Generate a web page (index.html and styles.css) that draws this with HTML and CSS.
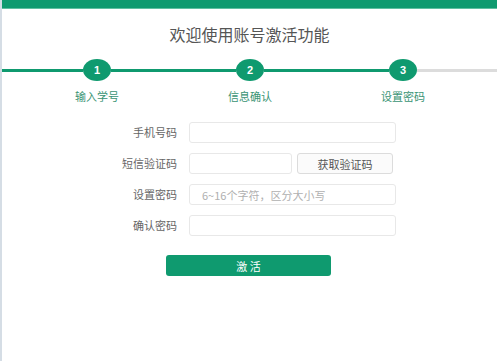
FILE: index.html
```html
<!DOCTYPE html>
<html lang="zh-CN">
<head>
    <meta charset="UTF-8">
    <meta name="viewport" content="width=device-width, initial-scale=1.0">
    <title>账号激活</title>
    <link rel="stylesheet" href="styles.css">
</head>
<body>
    <div class="page">
        <div class="top-bar"></div>

        <h1 class="title">欢迎使用账号激活功能</h1>

        <div class="steps">
            <div class="seg seg-first done"></div>
            <div class="circle">1</div>
            <div class="seg seg-mid done"></div>
            <div class="circle">2</div>
            <div class="seg seg-mid done"></div>
            <div class="circle">3</div>
            <div class="seg seg-last"></div>
        </div>

        <div class="step-labels">
            <span>输入学号</span>
            <span>信息确认</span>
            <span>设置密码</span>
        </div>

        <form class="form">
            <label class="form-label">手机号码</label>
            <input class="input" type="text">

            <label class="form-label">短信验证码</label>
            <div class="code-row">
                <input class="input input-short" type="text">
                <button type="button" class="code-btn">获取验证码</button>
            </div>

            <label class="form-label">设置密码</label>
            <input class="input" type="password" placeholder="6~16个字符，区分大小写">

            <label class="form-label">确认密码</label>
            <input class="input" type="password">
        </form>

        <div class="submit-wrap">
            <button type="button" class="submit-btn">激 活</button>
        </div>
    </div>
</body>
</html>
```

FILE: styles.css
```css
* {
    box-sizing: border-box;
}

body {
    margin: 0;
    background: #fff;
    font-family: 'Noto Sans CJK SC', 'Noto Sans', sans-serif;
    color: #555;
}

.page {
    min-height: 100vh;
    border-left: 2px solid #d5dde5;
}

.top-bar {
    height: 9px;
    background: #0f9a6f;
    border-bottom: 1px solid #5fbfa0;
}

.title {
    margin: 15px 0 0;
    font-size: 16px;
    font-weight: normal;
    line-height: 20px;
    text-align: center;
    color: #555;
}

.steps {
    display: flex;
    align-items: center;
    margin-top: 15px;
}

.seg {
    height: 3px;
    background: #dcdcdc;
}

.seg.done {
    background: #0f9a6f;
}

.seg-first { width: 81px; }
.seg-mid { width: 125px; }
.seg-last { flex: 1; }

.circle {
    width: 28px;
    height: 22px;
    border-radius: 50%;
    background: #0f9a6f;
    color: #fff;
    font-family: 'Liberation Sans', Arial, sans-serif;
    font-size: 11px;
    font-weight: bold;
    display: flex;
    align-items: center;
    justify-content: center;
}

.step-labels {
    display: flex;
    gap: 33px;
    padding-left: 35px;
    margin-top: 8px;
}

.step-labels span {
    width: 120px;
    text-align: center;
    font-size: 11px;
    line-height: 14px;
    color: #3a9474;
}

.form {
    display: grid;
    grid-template-columns: 80px 207px;
    column-gap: 12px;
    row-gap: 10px;
    padding-left: 95px;
    margin-top: 19px;
}

.form-label {
    font-size: 11px;
    line-height: 21px;
    text-align: right;
    color: #666;
}

.input {
    height: 21px;
    width: 100%;
    border: 1px solid #e8e8e8;
    border-radius: 3px;
    padding: 0 12px;
    font-family: inherit;
    font-size: 11px;
    color: #555;
    background: #fff;
}

.input::placeholder {
    color: #b0b0b0;
}

.code-row {
    display: flex;
    gap: 5px;
}

.input-short {
    width: 103px;
}

.code-btn {
    width: 96px;
    height: 21px;
    border: 1px solid #dcdcdc;
    border-radius: 3px;
    background: #fbfbfb;
    font-family: inherit;
    font-size: 11px;
    color: #555;
    padding: 0;
}

.submit-wrap {
    display: flex;
    padding-left: 164px;
    margin-top: 19px;
}

.submit-btn {
    width: 165px;
    height: 21px;
    border: none;
    border-radius: 3px;
    background: #0f9a6f;
    color: #fff;
    font-family: inherit;
    font-size: 11px;
    padding: 0;
}
```
